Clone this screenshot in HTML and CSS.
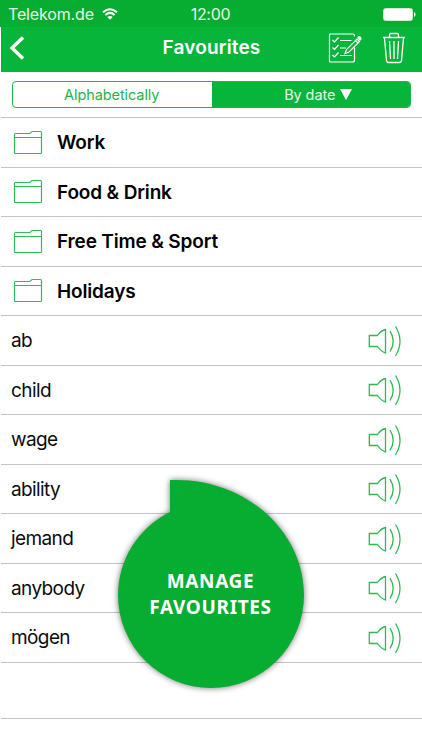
FILE: index.html
```html
<!DOCTYPE html>
<html lang="en">

<head>
    <meta charset="utf-8">
    <meta name="viewport" content="width=device-width, initial-scale=1">
    <title>Favourites</title>

    <link rel="stylesheet" href="styles.css">
</head>

<body>
    <!-- shared icons -->
    <svg class="defs" width="0" height="0">
        <symbol id="folder" viewBox="0 0 30 26">
            <path d="M1.500 4.500q0-1 1-1H16q1.500 0 2-1t1.500-1H27.500q1 0 1 1V22.500q0 1-1 1H2.500q-1 0-1-1zM1.500 7.500h27" />
        </symbol>
        <symbol id="sound" viewBox="0 0 34 32">
            <path d="M1.300 10.500H9.500q3.500-5 8-6V28q-4.500-1.500-8-6.500H1.300zM22 6.200q6.400 10 0 20.300M27.500 1.500q9 14.500 0 29.500" />
        </symbol>
    </svg>

    <div class="page">
        <div class="status">
            <div class="carrier">
                <span>Telekom.de</span>
                <svg class="wifi" viewBox="0 0 16 12">
                    <path d="M1 4.300q7-6 14 0M3.400 6.900q4.600-4 9.200 0" />
                    <path class="dot" d="M5.300 9q2.700-2.200 5.400 0L8 11.800z" />
                </svg>
            </div>
            <span class="time">12:00</span>
            <svg class="battery" viewBox="0 0 33 13">
                <rect class="shell" x=".5" y=".5" width="29" height="12" rx="2" />
                <rect x="1" y="1" width="28" height="11" rx="1" />
                <path d="M31 4q1.500.8 1.500 2.500T31 9z" />
            </svg>
        </div>
        <div class="nav">
            <svg class="back" viewBox="0 0 16 24">
                <path d="M14 1.500L3 12l11 10.500" />
            </svg>
            <h1 class="tit">Favourites</h1>
            <div class="tools">
                <svg class="edit" viewBox="0 0 34 30">
                    <path d="M26.500 3.500V3q0-2-2-2H2.500q-1 0-1 1V28q0 1 1 1h22q2 0 2-2V14.500" />
                    <path d="M4.500 7l2 2 4-4.500M4.500 14.500l2 2 4-4.500M4.500 22l2 2 4-4.500M12 7.500h11.500M12 15h6M12 22.500h12" />
                    <path d="M17 20.500l1.500-4L29 6l2.500 2.500L21 19zM27.500 7.500l2.500 2.500" />
                    <path class="tip" d="M30 4.500l1-.8q2 .2 2 2.300l-1 1z" />
                </svg>
                <svg class="trash" viewBox="0 0 24 32">
                    <path d="M1 5.500h22M7.500 5V3q0-1.500 1.500-1.500h6q1.500 0 1.500 1.500v2M2.500 6l2 22.500q.2 2 2 2h11q1.800 0 2-2L21.500 6M7.500 9l1 18M12 9v18M16.500 9l-1 18" />
                </svg>
            </div>
        </div>
        <div class="sort">
            <div class="tabs">
                <div class="tab"><span>Alphabetically</span></div>
                <div class="tab on">
                    <span>By date</span>
                    <svg class="arrow" viewBox="0 0 12 11">
                        <path d="M0 0h12L6 11z" />
                    </svg>
                </div>
            </div>
        </div>
        <ul class="list">
            <li class="folder"><svg class="ico"><use href="#folder" /></svg><span>Work</span></li>
            <li class="folder"><svg class="ico"><use href="#folder" /></svg><span>Food &amp; Drink</span></li>
            <li class="folder"><svg class="ico"><use href="#folder" /></svg><span>Free Time &amp; Sport</span></li>
            <li class="folder"><svg class="ico"><use href="#folder" /></svg><span>Holidays</span></li>
            <li><span>ab</span><svg class="sound"><use href="#sound" /></svg></li>
            <li><span>child</span><svg class="sound"><use href="#sound" /></svg></li>
            <li><span>wage</span><svg class="sound"><use href="#sound" /></svg></li>
            <li><span>ability</span><svg class="sound"><use href="#sound" /></svg></li>
            <li><span>jemand</span><svg class="sound"><use href="#sound" /></svg></li>
            <li><span>anybody</span><svg class="sound"><use href="#sound" /></svg></li>
            <li><span>mögen</span><svg class="sound"><use href="#sound" /></svg></li>
            <li class="empty"></li>
        </ul>

        <!-- floating button -->
        <div class="manage">
            <svg class="drop" viewBox="0 0 186 208">
                <path d="M52 0V32A93 93 0 0 0 0 115A93 93 0 0 0 93 208A93 93 0 0 0 186 115C186 52 128-3 52 0z" />
            </svg>
            <div class="label"><span>MANAGE</span><span>FAVOURITES</span></div>
        </div>
    </div>
</body>

</html>
```

FILE: styles.css
```css
* {
    padding: 0;
    margin: 0;
    box-sizing: border-box;
}

html,
body {
    background: #fff;
    color: #0b0b0b;
    font-family: Inter, "Liberation Sans", sans-serif;
    font-size: 19px;
}

ul,
li {
    list-style: none;
}

svg {
    display: block;
    flex: none;
    fill: none;
    stroke: #fff;
}

.defs {
    position: absolute;
}

.page {
    position: relative;
    height: 750px;
    overflow: hidden;
}

.status {
    display: grid;
    grid-template-columns: 1fr auto 1fr;
    align-items: center;
    height: 27px;
    padding: 1px 6px 0 8px;
    background: #06ad31;
    color: #e4f7e8;
    font-size: 16px;
}

.carrier {
    display: flex;
    align-items: center;
    gap: 8px;
    letter-spacing: -0.15px;
}

.wifi {
    width: 16px;
    height: 12px;
    stroke-width: 2;
}

.wifi .dot {
    fill: #fff;
    stroke: none;
}

.time {
    letter-spacing: -0.3px;
    padding-right: 3px;
}

.battery {
    width: 33px;
    height: 13px;
    justify-self: end;
    fill: #fff;
    stroke: none;
}

.battery .shell {
    fill: none;
    stroke: #c9f0d2;
}

.nav {
    display: grid;
    grid-template-columns: 1fr auto 1fr;
    align-items: center;
    height: 45px;
    margin-left: 1px;
    padding: 0 16px 3px 8px;
    background: #08b53b;
    color: #fff;
}

.back {
    width: 16px;
    height: 24px;
    stroke-width: 3.4;
}

.tit {
    padding-left: 8px;
    font-size: 19px;
    font-weight: 600;
    line-height: 24px;
    letter-spacing: 0.15px;
}

.tools {
    display: flex;
    justify-content: flex-end;
    align-items: center;
    gap: 20px;
}

.edit {
    width: 34px;
    height: 30px;
    stroke-width: 1.2;
}

.edit .tip {
    fill: #fff;
}

.trash {
    width: 24px;
    height: 32px;
    stroke-width: 1.3;
}

.sort {
    height: 46px;
    margin-left: 1px;
    padding: 9px 11px 0;
    border-bottom: 1px solid #c4c4c4;
}

.tabs {
    display: flex;
    height: 27px;
    border: 1px solid #1bb54a;
    border-radius: 4px;
    overflow: hidden;
}

.tab {
    display: flex;
    width: 50%;
    justify-content: center;
    align-items: center;
    gap: 5px;
    padding-right: 1px;
    color: #1bb54a;
    font-size: 14.5px;
    letter-spacing: -0.08px;
}

.tab.on {
    padding: 0 0 0 15px;
    background: #08b53b;
    color: #e9faed;
}

.arrow {
    width: 12px;
    height: 11px;
    fill: #fff;
    stroke: none;
}

.list {
    margin-left: 1px;
}

.list li {
    display: flex;
    justify-content: space-between;
    align-items: center;
    height: 49.5px;
    padding: 1px 20px 0 10px;
    border-bottom: 1px solid #c4c4c4;
    letter-spacing: -0.6px;
}

.list .folder {
    justify-content: flex-start;
    gap: 14px;
    padding-left: 12px;
    color: #000;
    font-weight: 600;
    letter-spacing: -0.15px;
}

.list .empty {
    height: 56.5px;
}

.ico {
    width: 30px;
    height: 26px;
    stroke: #2fbd5b;
    stroke-width: 1.2;
}

.sound {
    width: 34px;
    height: 32px;
    stroke: #2fb856;
    stroke-width: 1.3;
}

.manage {
    position: absolute;
    left: 117.5px;
    top: 480px;
    width: 186px;
    height: 208px;
}

.drop {
    width: 186px;
    height: 208px;
    overflow: visible;
    fill: #06ad31;
    stroke: none;
    filter: drop-shadow(0 0 3px rgba(0, 0, 0, 0.55));
}

.label {
    position: absolute;
    left: 0;
    top: 88px;
    display: flex;
    flex-direction: column;
    align-items: center;
    width: 100%;
    color: #fff;
    font-family: "Noto Sans", "Open Sans", sans-serif;
    font-size: 19px;
    font-weight: 700;
    line-height: 26px;
    letter-spacing: 0.65px;
}
```
